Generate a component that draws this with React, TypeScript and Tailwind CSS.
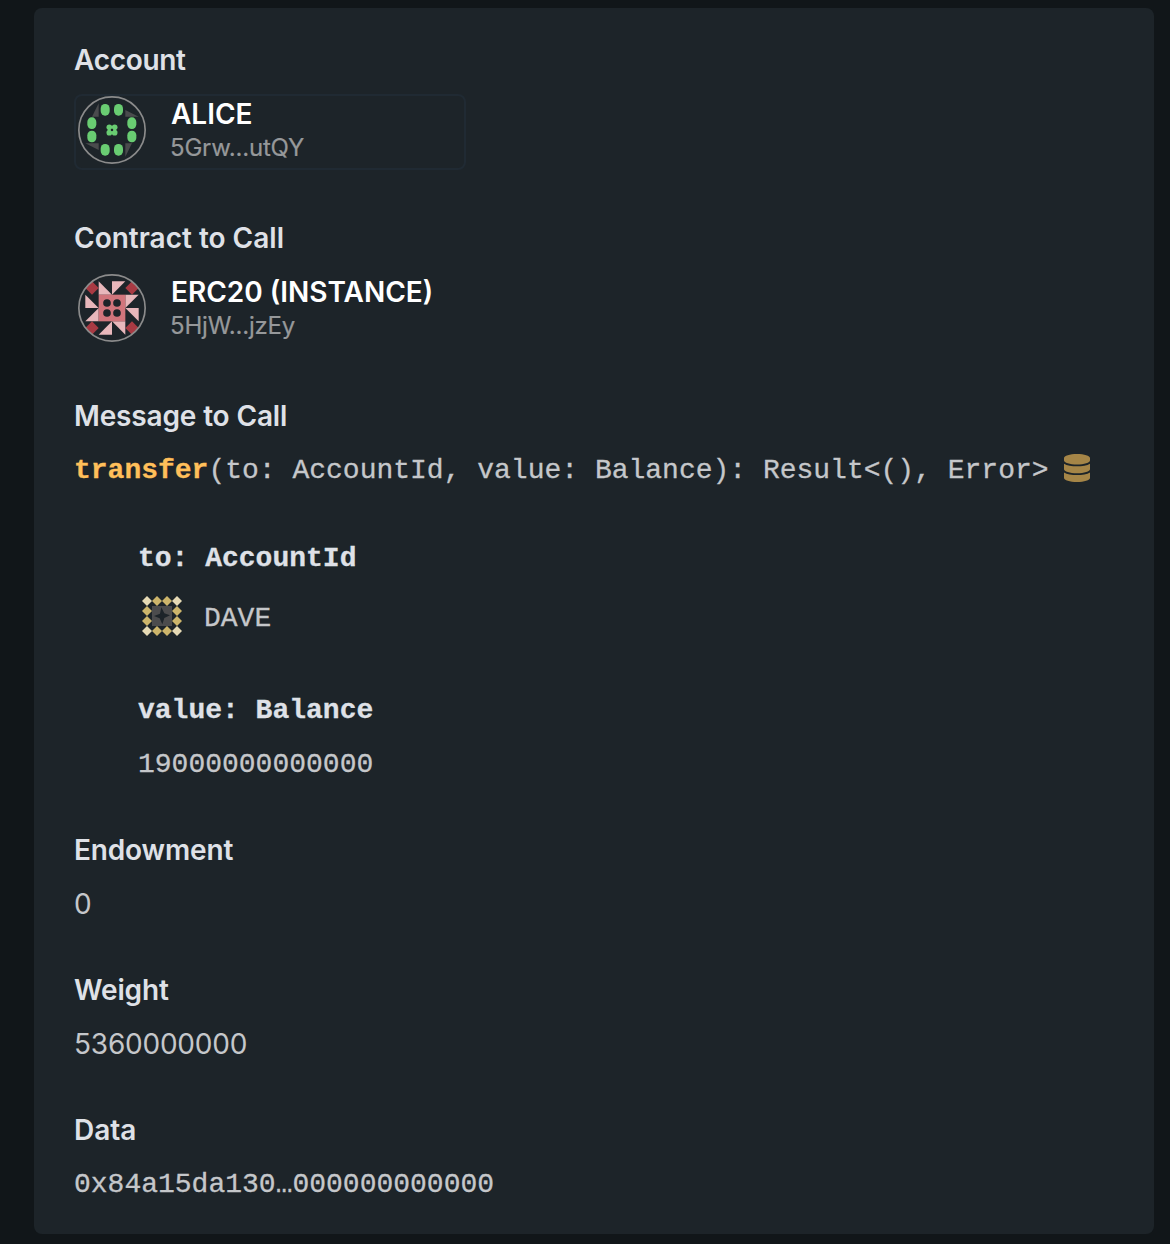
import React from "react";

const sans = "font-['Inter',sans-serif]";
const mono = "font-['Liberation_Mono',monospace] [-webkit-text-stroke:0.3px_currentColor]";

const dots: [number, number][] = [
  [118, 72], [158, 72], [78, 112], [78, 152],
  [198, 112], [198, 152], [118, 192], [158, 192],
];

function Ring() {
  return <circle cx="138" cy="132" r="99.5" fill="none" stroke="#8b8b8b" strokeWidth="5" />;
}

function AliceIcon() {
  return (
    <svg viewBox="36 30 204 204" className="h-[68px] w-[68px] shrink-0">
      <g fill="#4a4b4d">
        <path d="M98 52V92H78Z" />
        <path d="M178 72L218 92H178Z" />
        <path d="M178 172H198L178 212Z" />
        <path d="M58 172H98V192Z" />
      </g>
      <g fill="#69cc72">
        {dots.map(([x, y]) => (
          <rect key={`${x}-${y}`} x={x - 14} y={y - 18} width="27" height="35" rx="13" ry="14" />
        ))}
        <circle cx="130" cy="124" r="8.500" />
        <circle cx="146" cy="124" r="8.500" />
        <circle cx="130" cy="140" r="8.500" />
        <circle cx="146" cy="140" r="8.500" />
      </g>
      <circle cx="138" cy="132" r="3.500" fill="#1d2429" />
      <Ring />
    </svg>
  );
}

function ContractIcon() {
  return (
    <svg viewBox="36 30 204 204" className="h-[68px] w-[68px] shrink-0">
      <g fill="#a83a43">
        <path d="M78 52L98 72L78 92L58 72Z" />
        <path d="M198 52L218 72L198 92L178 72Z" />
        <path d="M78 172L98 192L78 212L58 192Z" />
        <path d="M198 172L218 192L198 212L178 192Z" />
      </g>
      <g fill="#e8b7bb">
        <path d="M98 52L138 92H98Z" />
        <path d="M138 52H178L138 92Z" />
        <path d="M178 92H218L178 132Z" />
        <path d="M178 132H218V172Z" />
        <path d="M138 172H178V212Z" />
        <path d="M138 172V212H98Z" />
        <path d="M98 132V172H58Z" />
        <path d="M58 92L98 132H58Z" />
      </g>
      <path d="M98 92H178V172H98Z" fill="#d1757c" />
      <g fill="#1d2429">
        <circle cx="123" cy="117" r="11.500" />
        <circle cx="153" cy="117" r="11.500" />
        <circle cx="123" cy="147" r="11.500" />
        <circle cx="153" cy="147" r="11.500" />
      </g>
      <Ring />
    </svg>
  );
}

const diamonds: [number, number, boolean][] = [
  [51, 48, true], [81, 48, false], [111, 48, false], [141, 48, true],
  [51, 78, false], [141, 78, false], [51, 108, false], [141, 108, false],
  [51, 138, true], [81, 138, false], [111, 138, false], [141, 138, true],
];

function DaveIcon() {
  return (
    <svg viewBox="36 33 120 120" className="h-10 w-10 shrink-0">
      <path d="M66 63H126V123H66Z" fill="#4c4c4d" />
      <path d="M94 67L103 85L120 91L103 99L97 118L89 100L72 93L90 86Z" fill="#1d2429" />
      {diamonds.map(([x, y, corner]) => (
        <path
          key={`${x}-${y}`}
          d={`M${x} ${y - 15}l15 15l-15 15l-15 -15Z`}
          fill={corner ? "#e6dab5" : "#cdb56b"}
        />
      ))}
    </svg>
  );
}

function DatabaseIcon() {
  return (
    <svg viewBox="0 0 448 512" className="mb-1 h-7 w-[26px] shrink-0" preserveAspectRatio="none" fill="#a58547">
      <path d="M448 73.143v45.714C448 159.143 347.667 192 224 192S0 159.143 0 118.857V73.143C0 32.857 100.333 0 224 0s224 32.857 224 73.143zM448 176v102.857C448 319.143 347.667 352 224 352S0 319.143 0 278.857V176c48.125 33.143 136.208 48.572 224 48.572S399.874 209.143 448 176zm0 160v102.857C448 479.143 347.667 512 224 512S0 479.143 0 438.857V336c48.125 33.143 136.208 48.572 224 48.572S399.874 369.143 448 336z" />
    </svg>
  );
}

function Label({ children, tracking = "tracking-[-0.15px]" }: { children: React.ReactNode; tracking?: string }) {
  return (
    <h2 className={`h-10 text-[28px] leading-[41px] font-semibold whitespace-nowrap text-[#dfe1e7] ${tracking}`}>
      {children}
    </h2>
  );
}

function Identity({ icon, name, address, bordered }: { icon: React.ReactNode; name: string; address: string; bordered?: boolean }) {
  return (
    <div className={`mt-3.5 flex h-[76px] w-[392px] items-start rounded-lg border-2 px-0.5 ${bordered ? "border-[#202a33]" : "border-transparent"}`}>
      {icon}
      <div className="ml-6 whitespace-nowrap">
        <div className="h-9 pl-px text-[28px] leading-[37px] font-semibold text-white">{name}</div>
        <div className="h-8 text-[24px] leading-8 tracking-[-0.2px] text-[#96989a] [-webkit-text-stroke:0.2px_currentColor]">{address}</div>
      </div>
    </div>
  );
}

export default function App() {
  return (
    <div className={`h-[1244px] w-[1170px] overflow-hidden bg-[#111619] pt-2 pl-[34px] ${sans}`}>
      <main className="flex h-[1226px] w-[1120px] flex-col rounded-lg bg-[#1d2429] px-10 pt-8 text-[28px] text-[#c5c7ca]">
        <section className="h-[178px]">
          <Label tracking="tracking-[-0.3px]">Account</Label>
          <Identity bordered icon={<AliceIcon />} name="ALICE" address="5Grw...utQY" />
        </section>
        <section className="h-[178px]">
          <Label tracking="tracking-normal">Contract to Call</Label>
          <Identity icon={<ContractIcon />} name="ERC20 (INSTANCE)" address="5HjW...jzEy" />
        </section>
        <section className="h-[434px]">
          <Label>Message to Call</Label>
          <div className={`mt-3.5 flex h-10 items-center leading-[41px] whitespace-pre ${mono}`}>
            <span className="font-bold text-[#ffbf5a]">transfer</span>
            <span>(to: AccountId, value: Balance): Result&lt;(), Error&gt;</span>
            <span className="ml-[15px]"><DatabaseIcon /></span>
          </div>
          <div className={`pt-12 pl-16 ${mono}`}>
            <h3 className="h-10 leading-[42px] font-bold text-[#dfe1e7]">to: AccountId</h3>
            <div className="mt-[18px] ml-1 flex h-10 items-center gap-[22px] leading-10">
              <DaveIcon />
              <span className="pt-1.5">DAVE</span>
            </div>
            <h3 className="mt-[54px] h-10 leading-[42px] font-bold text-[#dfe1e7]">value: Balance</h3>
            <p className="mt-3.5 h-10 leading-[41px]">19000000000000</p>
          </div>
        </section>
        <section className="h-[140px]">
          <Label>Endowment</Label>
          <p className="mt-3.5 h-10 leading-[41px]">0</p>
        </section>
        <section className="h-[140px]">
          <Label>Weight</Label>
          <p className="mt-3.5 h-10 leading-[41px] tracking-[-0.22px]">5360000000</p>
        </section>
        <section>
          <Label tracking="tracking-normal">Data</Label>
          <p className={`mt-3.5 h-10 leading-[41px] ${mono}`}>0x84a15da130…000000000000</p>
        </section>
      </main>
    </div>
  );
}
